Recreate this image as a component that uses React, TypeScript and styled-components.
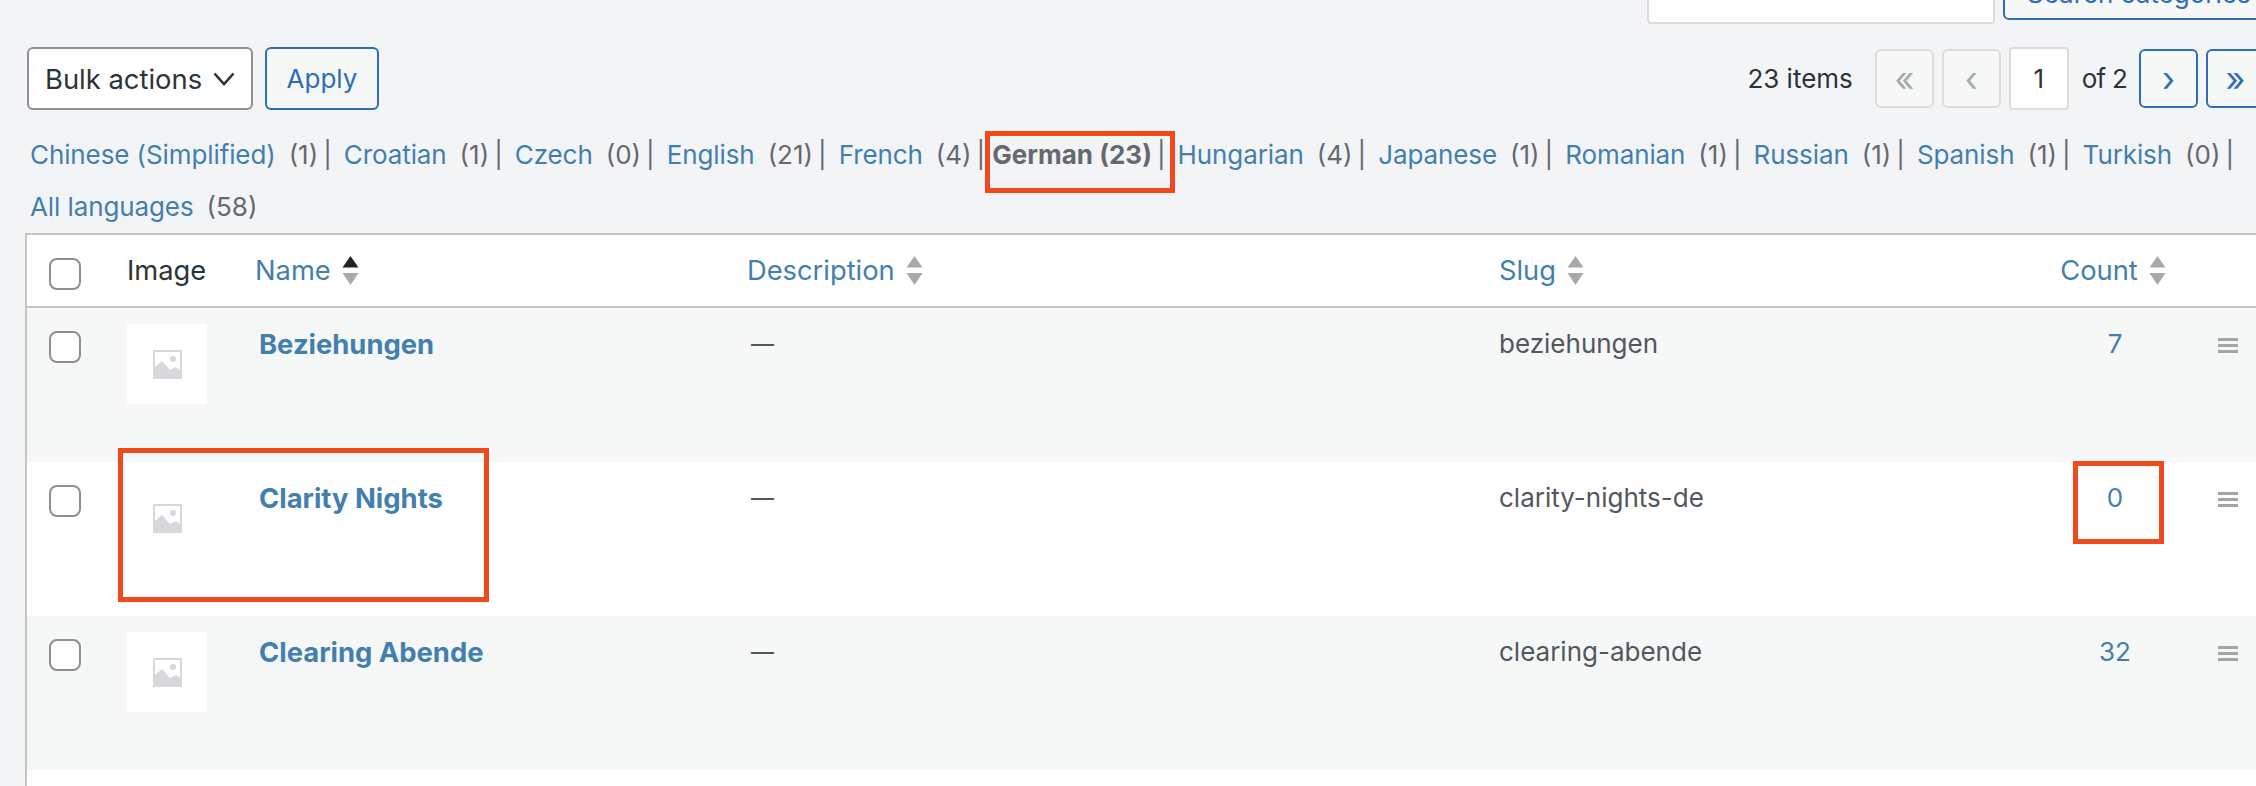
import styled, { createGlobalStyle } from "styled-components";

const GlobalStyle = createGlobalStyle`
  html, body {
    margin: 0;
    padding: 0;
    background: #f3f4f6;
  }
  body {
    font-family: Inter, "Noto Sans", sans-serif;
    font-size: 26px;
    color: #2c3338;
  }
  * {
    box-sizing: border-box;
  }
`;

const linkColor = "#437fae";
const blue = "#2f6db5";

const Page = styled.div`
  position: relative;
  width: 2256px;
  height: 786px;
  overflow: hidden;
`;

const SearchBar = styled.div`
  height: 24px;
  display: flex;
  justify-content: flex-end;
  align-items: flex-end;
  gap: 8px;
  margin-right: -30px;
  overflow: hidden;
`;

const SearchInput = styled.div`
  width: 348px;
  height: 60px;
  flex: none;
  background: #fff;
  border: 2px solid #dcdcde;
  border-radius: 4px;
`;

const SearchButton = styled.div`
  width: 283px;
  height: 60px;
  flex: none;
  margin-bottom: 4px;
  padding: 16px 0 0 22px;
  color: ${blue};
  background: #f6f7f7;
  border: 2px solid ${blue};
  border-radius: 6px;
  white-space: nowrap;
`;

const Toolbar = styled.div`
  height: 63px;
  margin: 23px -9px 19px 27px;
  display: flex;
  justify-content: space-between;
  align-items: center;
`;

const BulkGroup = styled.div`
  display: flex;
  gap: 12px;
`;

const Select = styled.div`
  width: 226px;
  height: 63px;
  padding: 0 16px 0 16px;
  display: flex;
  align-items: center;
  justify-content: space-between;
  font-size: 27.4px;
  background: #fff;
  border: 2px solid #8c8f94;
  border-radius: 6px;
  white-space: nowrap;
`;

const ApplyButton = styled.div`
  width: 114px;
  height: 63px;
  display: flex;
  align-items: center;
  justify-content: center;
  color: ${blue};
  background: #f6f7f7;
  border: 2px solid ${blue};
  border-radius: 6px;
`;

const Pager = styled.div`
  display: flex;
  align-items: center;
`;

const ItemCount = styled.span`
  margin-right: 22px;
`;

const PageButton = styled.div<{ $disabled?: boolean; $last?: boolean }>`
  width: 59px;
  height: 59px;
  margin-right: ${(p) => (p.$last ? "0" : "8px")};
  display: flex;
  align-items: center;
  justify-content: center;
  font-size: 34px;
  color: ${(p) => (p.$disabled ? "#a7aaad" : blue)};
  background: #f6f7f7;
  border: 2px solid ${(p) => (p.$disabled ? "#dcdcde" : blue)};
  border-radius: 6px;
`;

const PageInput = styled.div`
  width: 60px;
  height: 63px;
  display: flex;
  align-items: center;
  justify-content: center;
  background: #fff;
  border: 2px solid #dcdcde;
  border-radius: 4px;
`;

const PageTotal = styled.span`
  margin: 0 12px 0 13px;
  letter-spacing: -0.8px;
`;

const LangRow = styled.ul`
  list-style: none;
  margin: 0 0 0 30px;
  padding: 0;
  display: flex;
  flex-wrap: wrap;
  color: #646970;
  line-height: 52px;
  height: 104px;
`;

const LangItem = styled.li<{ $tight?: boolean }>`
  display: flex;
  white-space: nowrap;
  margin-left: ${(p) => (p.$tight ? "-5px" : "0")};
`;

const LangLink = styled.a`
  color: ${linkColor};
  letter-spacing: -0.1px;
`;

const LangCount = styled.span`
  margin-left: 13px;
`;

const LangSep = styled.span`
  margin: 0 12px 0 5px;
`;

const CurrentLang = styled.strong`
  font-weight: 700;
  color: #646970;
`;

const Table = styled.table`
  width: 2260px;
  margin-left: 25px;
  table-layout: fixed;
  border-collapse: separate;
  border-spacing: 0;
  font-size: 26px;
  color: #50575e;
  background: #fff;
  border: 2px solid #c3c4c7;
  border-right: 0;
  border-bottom: 0;
`;

const HeadCell = styled.th<{ $center?: boolean }>`
  height: 73px;
  padding: 0 0 0 12px;
  font-size: 27.3px;
  font-weight: 400;
  color: #2c3338;
  text-align: ${(p) => (p.$center ? "center" : "left")};
  border-bottom: 2px solid #c3c4c7;
`;

const HeadCheckCell = styled(HeadCell)`
  padding: 7px 0 0 22px;
`;

const SortLink = styled.a`
  display: inline-flex;
  align-items: center;
  gap: 11px;
  color: ${linkColor};
`;

const Row = styled.tr<{ $alt?: boolean }>`
  height: 154px;
  background: ${(p) => (p.$alt ? "#f6f7f7" : "#fff")};
`;

const Cell = styled.td<{ $center?: boolean }>`
  padding: 16px 0 0 16px;
  vertical-align: top;
  line-height: 40px;
  text-align: ${(p) => (p.$center ? "center" : "left")};
`;

const DashCell = styled(Cell)`
  font-size: 23px;
`;

const SlugCell = styled(Cell)`
  padding-left: 12px;
`;

const CheckCell = styled.td`
  padding: 23px 0 0 22px;
  vertical-align: top;
`;

const ThumbCell = styled.td`
  padding: 16px 0 0 12px;
  vertical-align: top;
`;

const Checkbox = styled.span`
  display: block;
  width: 32px;
  height: 32px;
  background: #fff;
  border: 2px solid #8c8f94;
  border-radius: 8px;
`;

const Thumb = styled.div`
  width: 80px;
  height: 80px;
  display: flex;
  align-items: center;
  justify-content: center;
  background: #fff;
`;

const NameLink = styled.a`
  font-size: 27.4px;
  font-weight: 700;
  color: ${linkColor};
`;

const CountLink = styled.a`
  color: ${linkColor};
`;

const HandleCell = styled.td`
  padding: 30px 0 0 46px;
  vertical-align: top;
`;

const Annotation = styled.div<{ $x: number; $y: number; $w: number; $h: number }>`
  position: absolute;
  left: ${(p) => p.$x}px;
  top: ${(p) => p.$y}px;
  width: ${(p) => p.$w}px;
  height: ${(p) => p.$h}px;
  border: 5px solid #f04a1c;
`;

function SortArrows({ active }: { active?: boolean }) {
  return (
    <svg width="17" height="29" viewBox="0 0 17 29">
      <path d="M8.5 0L16.5 11.5H0.5Z" fill={active ? "#1d2327" : "#a7aaad"} />
      <path d="M8.5 29L0.5 17H16.5Z" fill="#a7aaad" />
    </svg>
  );
}

function Chevron() {
  return (
    <svg width="22" height="14" viewBox="0 0 22 14" fill="none">
      <path d="M1.5 1.5L11 12L20.5 1.5" stroke="#2c3338" strokeWidth="2.6" />
    </svg>
  );
}

function Placeholder() {
  return (
    <svg width="29" height="29" viewBox="0 0 29 29">
      <rect width="29" height="29" fill="#d7d8db" />
      <rect x="2" y="2" width="25" height="25" fill="#fff" />
      <circle cx="20" cy="9" r="3" fill="#d7d8db" />
      <path d="M2 17L9 11L17 20L23 17L27 20V27H2Z" fill="#d7d8db" />
    </svg>
  );
}

function Handle() {
  return (
    <svg width="20" height="15" viewBox="0 0 20 15" style={{ display: "block" }}>
      <path d="M0 0H20V3H0ZM0 6H20V9H0ZM0 12H20V15H0Z" fill="#a2a4a7" />
    </svg>
  );
}

const languages = [
  { name: "Chinese (Simplified)", count: 1 },
  { name: "Croatian", count: 1 },
  { name: "Czech", count: 0 },
  { name: "English", count: 21 },
  { name: "French", count: 4 },
  { name: "German", count: 23, current: true },
  { name: "Hungarian", count: 4 },
  { name: "Japanese", count: 1 },
  { name: "Romanian", count: 1 },
  { name: "Russian", count: 1 },
  { name: "Spanish", count: 1 },
  { name: "Turkish", count: 0 },
];

const terms = [
  { name: "Beziehungen", slug: "beziehungen", count: 7 },
  { name: "Clarity Nights", slug: "clarity-nights-de", count: 0 },
  { name: "Clearing Abende", slug: "clearing-abende", count: 32 },
];

export default function App() {
  return (
    <Page>
      <GlobalStyle />
      <SearchBar>
        <SearchInput />
        <SearchButton>Search categories</SearchButton>
      </SearchBar>

      <Toolbar>
        <BulkGroup>
          <Select>
            Bulk actions
            <Chevron />
          </Select>
          <ApplyButton>Apply</ApplyButton>
        </BulkGroup>
        <Pager>
          <ItemCount>23 items</ItemCount>
          <PageButton $disabled>«</PageButton>
          <PageButton $disabled>‹</PageButton>
          <PageInput>1</PageInput>
          <PageTotal>of 2</PageTotal>
          <PageButton>›</PageButton>
          <PageButton $last>»</PageButton>
        </Pager>
      </Toolbar>

      <LangRow>
        {languages.map((lang) =>
          lang.current ? (
            <LangItem key={lang.name} $tight>
              <CurrentLang>
                {lang.name} ({lang.count})
              </CurrentLang>
              <LangSep>|</LangSep>
            </LangItem>
          ) : (
            <LangItem key={lang.name}>
              <LangLink>{lang.name}</LangLink>
              <LangCount>({lang.count})</LangCount>
              <LangSep>|</LangSep>
            </LangItem>
          )
        )}
        <LangItem>
          <LangLink>All languages</LangLink>
          <LangCount>(58)</LangCount>
        </LangItem>
      </LangRow>

      <Table>
        <colgroup>
          <col style={{ width: 88 }} />
          <col style={{ width: 128 }} />
          <col style={{ width: 492 }} />
          <col style={{ width: 752 }} />
          <col style={{ width: 555 }} />
          <col style={{ width: 130 }} />
          <col />
        </colgroup>
        <thead>
          <tr>
            <HeadCheckCell>
              <Checkbox />
            </HeadCheckCell>
            <HeadCell>Image</HeadCell>
            <HeadCell>
              <SortLink>
                Name
                <SortArrows active />
              </SortLink>
            </HeadCell>
            <HeadCell>
              <SortLink>
                Description
                <SortArrows />
              </SortLink>
            </HeadCell>
            <HeadCell>
              <SortLink>
                Slug
                <SortArrows />
              </SortLink>
            </HeadCell>
            <HeadCell $center>
              <SortLink>
                Count
                <SortArrows />
              </SortLink>
            </HeadCell>
            <HeadCell />
          </tr>
        </thead>
        <tbody>
          {terms.map((term, i) => (
            <Row key={term.slug} $alt={i % 2 === 0}>
              <CheckCell>
                <Checkbox />
              </CheckCell>
              <ThumbCell>
                <Thumb>
                  <Placeholder />
                </Thumb>
              </ThumbCell>
              <Cell>
                <NameLink>{term.name}</NameLink>
              </Cell>
              <DashCell>—</DashCell>
              <SlugCell>{term.slug}</SlugCell>
              <Cell $center>
                <CountLink>{term.count}</CountLink>
              </Cell>
              <HandleCell>
                <Handle />
              </HandleCell>
            </Row>
          ))}
          <tr style={{ height: 40 }}>
            <td colSpan={7} />
          </tr>
        </tbody>
      </Table>

      <Annotation $x={985} $y={131} $w={190} $h={62} />
      <Annotation $x={118} $y={448} $w={371} $h={154} />
      <Annotation $x={2073} $y={461} $w={91} $h={83} />
    </Page>
  );
}
